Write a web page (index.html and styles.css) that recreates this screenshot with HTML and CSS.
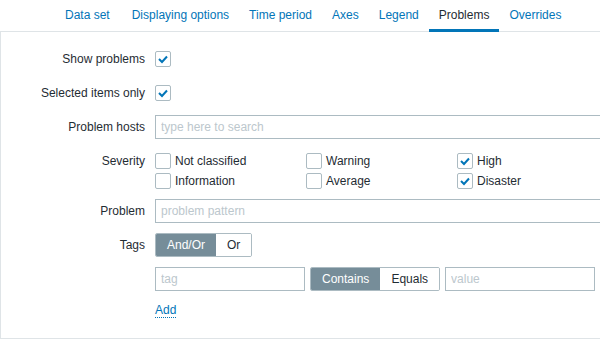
FILE: index.html
```html
<!DOCTYPE html>
<html lang="en">
<head>
    <meta charset="UTF-8">
    <meta name="viewport" content="width=device-width, initial-scale=1.0">
    <title>Graph widget - Problems</title>
    <link rel="stylesheet" href="styles.css">
</head>
<body>

    <div class="tabs">
        <!-- Pestañas -->
        <ul class="tab-nav">
            <li class="first"><a href="#">Data set</a></li>
            <li><a href="#">Displaying options</a></li>
            <li><a href="#">Time period</a></li>
            <li><a href="#">Axes</a></li>
            <li><a href="#">Legend</a></li>
            <li class="active"><a href="#">Problems</a></li>
            <li><a href="#">Overrides</a></li>
        </ul>

        <!-- Contenido de la pestaña Problems -->
        <div class="tab-panel">
            <div class="form-grid">
                <label class="form-label">Show problems</label>
                <div class="form-field">
                    <span class="checkbox checked"><svg viewBox="0 0 16 16"><polyline points="4,8 7,11 12,5.5"/></svg></span>
                </div>

                <label class="form-label">Selected items only</label>
                <div class="form-field">
                    <span class="checkbox checked"><svg viewBox="0 0 16 16"><polyline points="4,8 7,11 12,5.5"/></svg></span>
                </div>

                <label class="form-label">Problem hosts</label>
                <div class="form-field">
                    <input type="text" class="text-input wide" placeholder="type here to search">
                </div>

                <label class="form-label">Severity</label>
                <div class="form-field">
                    <ul class="severity-list">
                        <li><span class="checkbox"></span>Not classified</li>
                        <li><span class="checkbox"></span>Warning</li>
                        <li><span class="checkbox checked"><svg viewBox="0 0 16 16"><polyline points="4,8 7,11 12,5.5"/></svg></span>High</li>
                        <li><span class="checkbox"></span>Information</li>
                        <li><span class="checkbox"></span>Average</li>
                        <li><span class="checkbox checked"><svg viewBox="0 0 16 16"><polyline points="4,8 7,11 12,5.5"/></svg></span>Disaster</li>
                    </ul>
                </div>

                <label class="form-label">Problem</label>
                <div class="form-field">
                    <input type="text" class="text-input wide" placeholder="problem pattern">
                </div>

                <label class="form-label">Tags</label>
                <div class="form-field">
                    <div class="radio-group">
                        <span class="radio selected">And/Or</span>
                        <span class="radio">Or</span>
                    </div>
                </div>

                <span></span>
                <div class="form-field tag-row">
                    <input type="text" class="text-input tag-input" placeholder="tag">
                    <div class="radio-group">
                        <span class="radio selected">Contains</span>
                        <span class="radio">Equals</span>
                    </div>
                    <input type="text" class="text-input tag-input" placeholder="value">
                </div>

                <span></span>
                <div class="form-field add-row">
                    <a href="#" class="link-action">Add</a>
                </div>
            </div>
        </div>
    </div>

</body>
</html>
```

FILE: styles.css
```css
/* Estilos generales */
* {
    margin: 0;
    padding: 0;
    box-sizing: border-box;
    font-family: 'Liberation Sans', Arial, sans-serif;
}

html, body {
    overflow: hidden;
}

body {
    background-color: #fff;
    color: #1f2c33;
    font-size: 12px;
}

.tabs {
    width: 620px;
}

/* Pestañas */
.tab-nav {
    list-style: none;
    display: flex;
    padding-left: 55px;
    border-bottom: 1px solid #dfe4e7;
    height: 32px;
}

.tab-nav li {
    height: 32px;
}

.tab-nav li.first {
    margin-right: 2px;
}

.tab-nav a {
    display: block;
    padding: 0 10px;
    line-height: 31px;
    height: 32px;
    color: #0275b8;
    text-decoration: none;
}

.tab-nav li.active a {
    color: #1f2c33;
    box-shadow: inset 0 -3px 0 #0275b8;
}

/* Contenido */
.tab-panel {
    border: 1px solid #dfe4e7;
    border-top: none;
    padding: 15px 0 19px;
}

.form-grid {
    display: grid;
    grid-template-columns: 144px 1fr;
    column-gap: 10px;
    row-gap: 10px;
}

.form-label {
    text-align: right;
    line-height: 24px;
    height: 24px;
}

.form-field {
    min-height: 24px;
    display: flex;
    align-items: center;
}

/* Casillas */
.checkbox {
    display: inline-block;
    width: 16px;
    height: 16px;
    border: 1px solid #acbbc2;
    border-radius: 2px;
    background: #fff;
    flex-shrink: 0;
    position: relative;
}

.checkbox svg {
    position: absolute;
    left: -1px;
    top: -1px;
    width: 16px;
    height: 16px;
    fill: none;
    stroke: #0275b8;
    stroke-width: 2;
}

.severity-list {
    list-style: none;
    display: grid;
    grid-template-columns: repeat(3, 151px);
    margin: 2px 0 -2px;
}

.severity-list li {
    display: flex;
    align-items: center;
    gap: 4px;
    height: 20px;
}

/* Campos de texto */
.text-input {
    height: 24px;
    border: 1px solid #acbbc2;
    padding: 0 5px;
    font-size: 12px;
    color: #1f2c33;
    background: #fff;
    outline: none;
}

.text-input::placeholder {
    color: #bcc7cd;
}

.text-input.wide {
    width: 453px;
}

.tag-row {
    gap: 5px;
}

.tag-input {
    width: 150px;
}

/* Botones de opción */
.radio-group {
    display: flex;
    height: 24px;
    border: 1px solid #acbbc2;
    border-radius: 2px;
    overflow: hidden;
}

.radio {
    padding: 0 11px;
    line-height: 22px;
    color: #1f2c33;
    background: #fff;
}

.radio.selected {
    background-color: #768d99;
    color: #fff;
}

.add-row {
    min-height: 18px;
    padding-top: 1px;
}

.link-action {
    color: #0275b8;
    text-decoration: none;
    border-bottom: 1px dotted #0275b8;
    line-height: 14px;
}
```
